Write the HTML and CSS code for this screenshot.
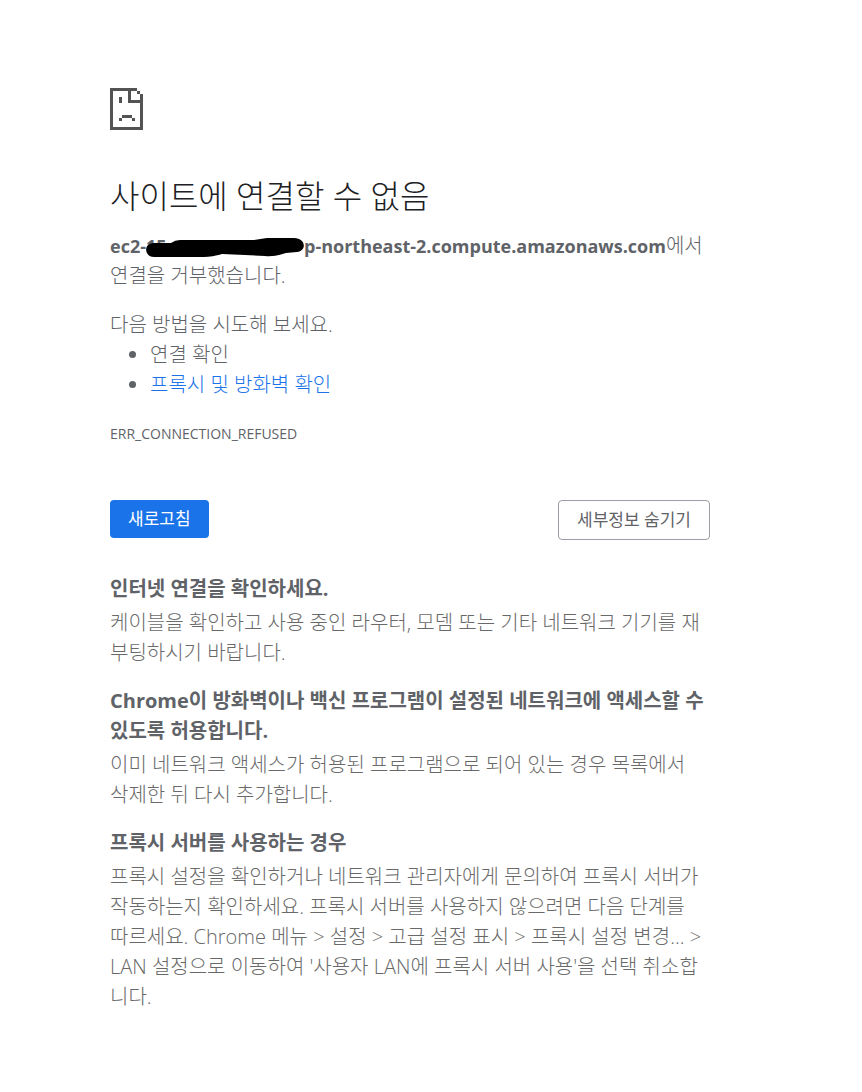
FILE: index.html
```html
<!DOCTYPE html>
<html lang="ko">
<head>
  <meta charset="UTF-8" />
  <meta name="viewport" content="width=device-width, initial-scale=1.0" />
  <title>사이트에 연결할 수 없음</title>
  <link rel="stylesheet" href="styles.css">
</head>
<body>

  <main class="interstitial">
    <svg class="icon" viewBox="0 0 11 14" shape-rendering="crispEdges" aria-hidden="true">
      <path d="M0 0h9v1h1v1h1v12H0zM1 1v12h9V5H6V1zM7 1v3h3V2H9V1z" fill-rule="evenodd" />
      <path d="M3 3h1v2H3zM4 9h3.4v1H4zM3 10h1v1H3zM7.4 10h1v1h-1z" />
    </svg>

    <h1>사이트에 연결할 수 없음</h1>
    <p class="summary"><strong>ec2-<span class="redacted">15<svg class="marker" viewBox="0 0 158 20" aria-hidden="true"><path d="M8 5H25Q29 2 34 2L85 2 108 2 121 0H148C160 0 161 13 151 14L140 15Q128 19 119 18L99 17 76 16Q66 19 58 19H8C-2 19-3 5 8 5z" /></svg></span>p-northeast-2.compute.amazonaws.com</strong>에서<br>연결을 거부했습니다.</p>

    <div class="suggestions">
      <p>다음 방법을 시도해 보세요.</p>
      <ul>
        <li>연결 확인</li>
        <li><a href="#buttons">프록시 및 방화벽 확인</a></li>
      </ul>
    </div>

    <div class="error-code">ERR_CONNECTION_REFUSED</div>

    <div class="buttons" id="buttons">
      <button class="reload" type="button">새로고침</button>
      <button class="toggle" type="button">세부정보 숨기기</button>
    </div>

    <section class="detail">
      <h2>인터넷 연결을 확인하세요.</h2>
      <p>케이블을 확인하고 사용 중인 라우터, 모뎀 또는 기타 네트워크 기기를 재<br>부팅하시기 바랍니다.</p>
    </section>

    <section class="detail">
      <h2>Chrome이 방화벽이나 백신 프로그램이 설정된 네트워크에 액세스할 수<br>있도록 허용합니다.</h2>
      <p>이미 네트워크 액세스가 허용된 프로그램으로 되어 있는 경우 목록에서<br>삭제한 뒤 다시 추가합니다.</p>
    </section>

    <section class="detail">
      <h2>프록시 서버를 사용하는 경우</h2>
      <p>프록시 설정을 확인하거나 네트워크 관리자에게 문의하여 프록시 서버가<br>작동하는지 확인하세요. 프록시 서버를 사용하지 않으려면 다음 단계를<br>따르세요. Chrome 메뉴 &gt; 설정 &gt; 고급 설정 표시 &gt; 프록시 설정 변경... &gt;<br>LAN 설정으로 이동하여 '사용자 LAN에 프록시 서버 사용'을 선택 취소합<br>니다.</p>
    </section>
  </main>

</body>
</html>
```

FILE: styles.css
```css
body {
  margin: 0;
  padding: 88px 42px 80px 0;
  background-color: #fff;
  color: #5f6368;
  font-family: "Open Sans", "Noto Sans CJK KR", sans-serif;
  font-size: 20px;
  line-height: 30px;
}
h1, h2, p, ul {
  margin: 0;
}
.interstitial {
  max-width: 600px;
  margin: 0 auto;
}
.icon {
  display: block;
  width: 33px;
  height: 42px;
  fill: #535353;
}
h1 {
  margin: 46px 0 15px;
  color: #202124;
  font-size: 32px;
  font-weight: 300;
  line-height: 40px;
}
.summary,
.suggestions,
.detail p {
  font-weight: 300;
}
.summary strong {
  font-size: 18px;
  font-weight: 700;
}
.redacted {
  position: relative;
  display: inline-block;
  width: 158px;
}
.marker {
  position: absolute;
  left: 0;
  top: 7px;
  width: 158px;
  height: 20px;
  fill: #000;
}
.suggestions {
  margin-top: 19px;
}
ul {
  padding-left: 40px;
}
a {
  color: #1a73e8;
  text-decoration: none;
}
.error-code {
  margin-top: 22px;
  font-size: 14px;
  line-height: 24px;
}
.buttons {
  display: flex;
  justify-content: space-between;
  align-items: flex-start;
  margin: 54px 0 34px;
}
button {
  padding: 8px 18px;
  border: 0;
  border-radius: 4px;
  font-family: inherit;
  font-size: 17px;
  line-height: 22px;
  cursor: pointer;
}
.reload {
  background-color: #1a73e8;
  color: #fff;
}
.toggle {
  border: 1px solid #9aa0a6;
  background-color: #fff;
  color: #5f6368;
}
.detail {
  margin-bottom: 18px;
}
.detail p {
  color: #696969;
}
h2 {
  margin-bottom: 4px;
  font-size: 20px;
  font-weight: 700;
}
```
